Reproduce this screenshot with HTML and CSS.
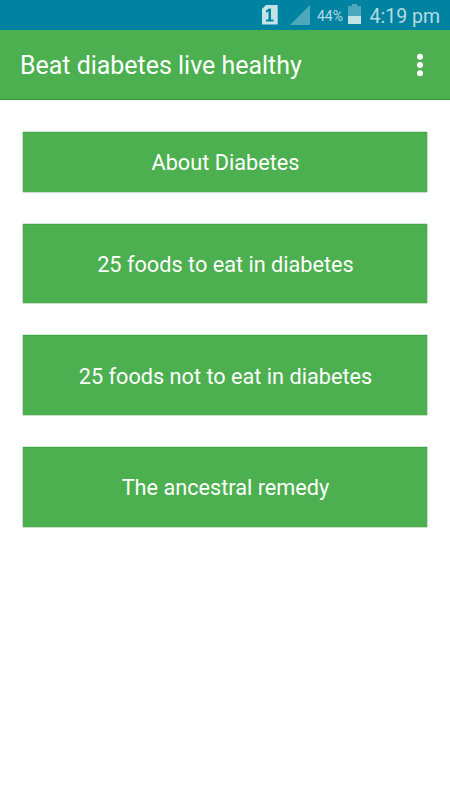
FILE: index.html
```html
<!DOCTYPE html>
<html lang="en">
<head>
<meta charset="utf-8">
<title>Beat diabetes live healthy</title>
<link rel="stylesheet" href="styles.css">
</head>
<body>
<div class="status">
  <svg class="sim" width="16" height="20" viewBox="0 0 16 20"><path d="M4 0H15.7V19.5H0V4Z" fill="#c4e3e9"/><path d="M4 5.5L7 3.5H9V14.5H11.5V16.5H4V14.5H6.5V6.5L4 7.7Z" fill="#0083a0"/></svg>
  <svg class="signal" width="20" height="20" viewBox="0 0 20 20"><path d="M20 0V20H0Z" fill="#4da8bb"/></svg>
  <span class="percent">44%</span>
  <svg class="battery" width="13" height="20" viewBox="0 0 13 20"><path d="M4 0H9V2H13V12H0V2H4Z" fill="#4da8bb"/><path d="M0 12H13V20H0Z" fill="#c4e3e9"/></svg>
  <span class="time">4:19 pm</span>
</div>
<header class="bar">
  <h1 class="title">Beat diabetes live healthy</h1>
  <svg class="more" width="8" height="24" viewBox="0 0 8 24" fill="#fff"><circle cx="4" cy="3.7" r="3"/><circle cx="4" cy="12" r="3"/><circle cx="4" cy="20.3" r="3"/></svg>
</header>
<main class="menu">
  <button class="item item-short">About Diabetes</button>
  <button class="item">25 foods to eat in diabetes</button>
  <button class="item">25 foods not to eat in diabetes</button>
  <button class="item">The ancestral remedy</button>
</main>
</body>
</html>
```
FILE: styles.css
```css
body { margin: 0; width: 450px; height: 800px; background: #fff; font-family: Roboto, sans-serif; overflow: hidden; }
.status { height: 30px; box-sizing: border-box; background: #0083a0; display: flex; align-items: center; padding: 0 10px 0 262px; color: #b5dbe4; }
.signal { margin-left: 12px; }
.percent { margin: 2px 0 0 7px; width: 27px; font-size: 14px; white-space: nowrap; }
.battery { margin: 0 0 2px 4px; }
.time { margin: 2px 0 0 auto; font-size: 19.5px; white-space: nowrap; }
.bar { height: 70px; box-sizing: border-box; background: #4caf50; border-bottom: 1px solid #2f9f35; display: flex; align-items: center; justify-content: space-between; padding: 1px 26px 0 20px; color: #fff; }
.title { margin: 0; font-size: 24.95px; font-weight: 400; white-space: nowrap; }
.menu { display: flex; flex-direction: column; gap: 32px; padding: 32px 23px 0; }
.item { height: 79.7px; border: 0; padding: 3px 0 0 1px; background: #4caf50; color: #fff; font: 400 21.7px/28px Roboto, sans-serif; box-shadow: 0 1px #c9dcc9, 0 -1px #d3e6d3, -1px 0 #c9dcc9, 1px 0 #c9dcc9, inset 0 1px #3fa943; }
.item-short { height: 59.5px; padding-top: 2px; }
```
